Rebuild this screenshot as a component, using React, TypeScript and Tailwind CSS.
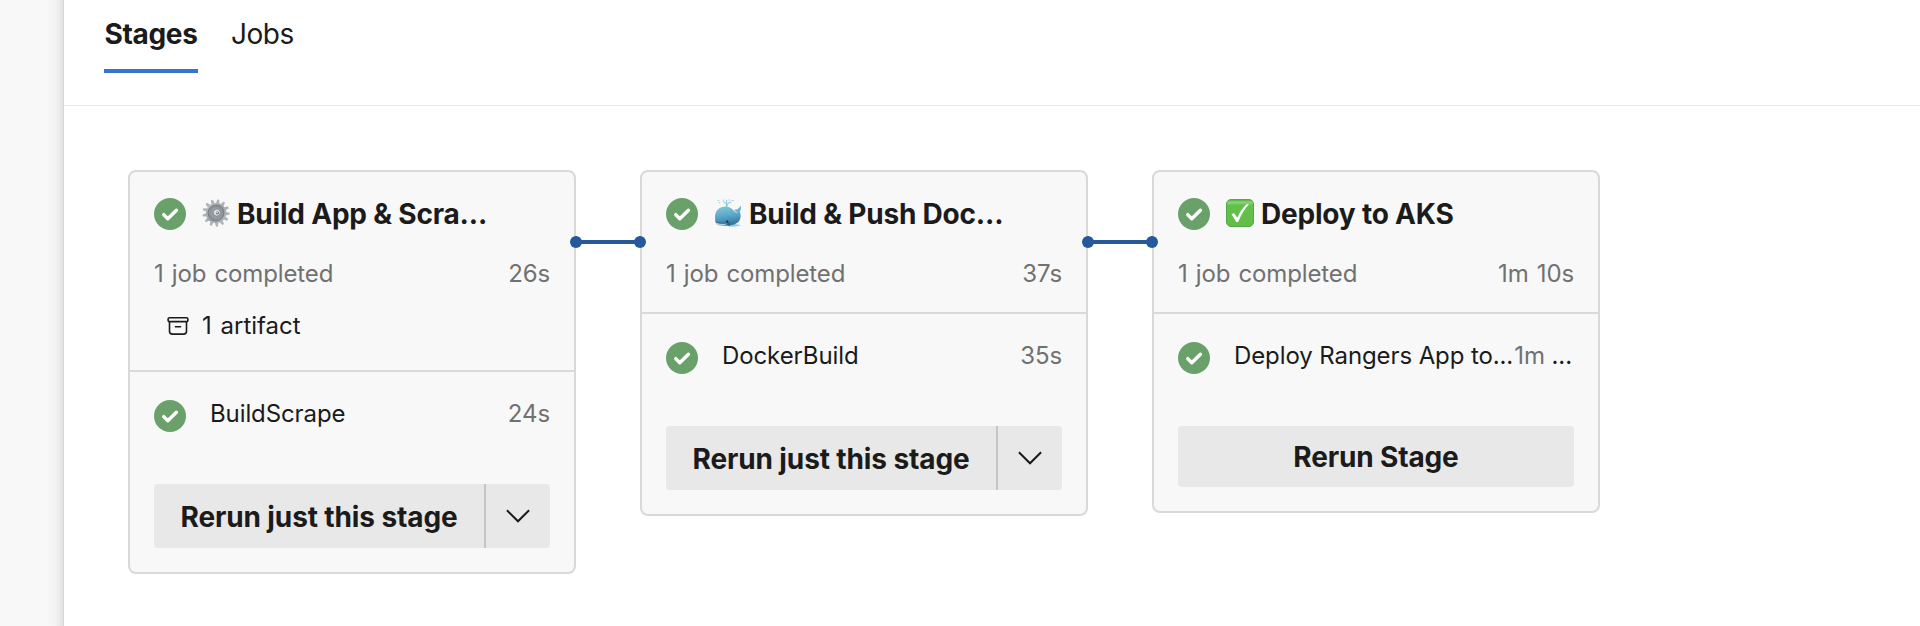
import React from "react";

function StatusIcon() {
  return (
    <svg className="size-8 shrink-0" viewBox="0 0 32 32" fill="none">
      <circle cx="16" cy="16" r="16" fill="#6aa16a" />
      <path d="M9.7 16.6L13.8 20.8L22.4 12.2" stroke="#fff" strokeWidth="3.4" strokeLinecap="round" strokeLinejoin="round" />
    </svg>
  );
}

function GearEmoji() {
  return (
    <svg className="size-7 shrink-0" viewBox="0 0 28 28">
      <defs>
        <linearGradient id="gear" x1="0" y1="0" x2="1" y2="1">
          <stop offset="0" stopColor="#c3c8cc" />
          <stop offset="0.5" stopColor="#9aa1a6" />
          <stop offset="1" stopColor="#b9bec2" />
        </linearGradient>
      </defs>
      {Array.from({ length: 13 }, (_, i) => (
        <path key={i} d="M12.2 5L12.9 0.4H14.9L15.9 5Z" fill="#afb4b8" transform={`rotate(${(i * 360) / 13 + 10} 14 14)`} />
      ))}
      <circle cx="14" cy="14" r="10.2" fill="url(#gear)" />
      <circle cx="14" cy="14" r="7.9" fill="#8d9499" stroke="#777f85" strokeWidth="1" />
      <circle cx="14" cy="14" r="5.4" fill="#979ea3" />
      <circle cx="14.8" cy="13.6" r="3.5" fill="#e2e5e7" stroke="#70787e" strokeWidth="0.7" />
      <circle cx="15.4" cy="13.8" r="1.6" fill="#666d73" />
      <circle cx="15.2" cy="13.6" r="0.8" fill="#f4f5f5" />
    </svg>
  );
}

function WhaleEmoji() {
  return (
    <svg className="size-7 shrink-0" viewBox="0 0 28 28">
      <defs>
        <linearGradient id="whale" x1="0" y1="0" x2="0.2" y2="1">
          <stop offset="0" stopColor="#8accdc" />
          <stop offset="0.55" stopColor="#5aa9cb" />
          <stop offset="1" stopColor="#39749f" />
        </linearGradient>
      </defs>
      <path d="M12.6 7.6C12.8 5 12 3.4 9.6 3M12.8 7.6C12.9 4.6 14.4 3.2 17 3.2M12.7 5.5V1.2" stroke="#7cc8de" strokeWidth="1" fill="none" strokeLinecap="round" />
      <path d="M5 1.6H4M18 1.6H19.4M6 3.4L5 3.8M9 1.2H10M15 1H16" stroke="#9bd6e6" strokeWidth="1" strokeLinecap="round" />
      <path d="M15 25.6C20 24.2 25 25 26.8 26.6C22 28 17 27.8 13 27Z" fill="#9accdf" />
      <path d="M1 18C1 11 6 7.2 12 7.4C18 7.6 19.5 12.6 22.4 13.6C23.6 13.8 23.5 13.4 23 12.9C20.8 12.6 20.2 11.4 20.7 10.4C22.2 10.8 23.5 10.4 24.5 9.3C25.5 8.3 26.1 7.3 26.9 6.7C27.4 9 26.9 11.3 25.7 12.4C27.3 16 27 20.4 24 23.2C20 27 7.5 27.9 3.2 25.3C1.4 24 1 21 1 18Z" fill="url(#whale)" />
      <path d="M1.7 23.3C5 24.8 9 25.2 13 24.6C11.5 26.6 9.5 26.9 7.5 26.8C4.6 26.6 2.4 25.8 1.7 23.3Z" fill="#a9cee2" />
      <path d="M1.4 22.8C5 24.4 10 24.6 14 23.6" stroke="#326a94" strokeWidth="0.8" fill="none" />
      <path d="M14 23.2C16.5 23 17 25.2 15.5 27.2C14 26.2 13.1 24.9 14 23.2Z" fill="#2c6190" />
      <circle cx="13.2" cy="22.6" r="1.1" fill="#142f4b" />
    </svg>
  );
}

function CheckEmoji() {
  return (
    <svg className="size-7 shrink-0" viewBox="0 0 28 28">
      <defs>
        <linearGradient id="check" x1="0" y1="0" x2="0" y2="1">
          <stop offset="0" stopColor="#4ea345" />
          <stop offset="0.1" stopColor="#8bd673" />
          <stop offset="0.22" stopColor="#61c04a" />
          <stop offset="1" stopColor="#64bd48" />
        </linearGradient>
      </defs>
      <rect x="0.5" y="0.5" width="27" height="27" rx="4.5" fill="url(#check)" stroke="#55a948" />
      <path d="M5.4 15L8.2 14.2L11.2 18.8C13.6 13.4 16.7 8.7 20.6 5.2L23 5.2C18.5 10 14.9 15.8 12.2 23H10.2Z" fill="#fff" />
    </svg>
  );
}

function ArtifactIcon() {
  return (
    <svg className="h-5 w-[22px] shrink-0" viewBox="0 0 22 20" fill="none" stroke="#1b1b1b" strokeWidth="1.6">
      <rect x="1.1" y="1.75" width="19.8" height="3.9" rx="1.5" />
      <path d="M2.5 5.8V15.2C2.5 17 3.6 18.1 5.4 18.1H16.6C18.4 18.1 19.5 17 19.5 15.2V5.8M8.4 10.7H13.6" strokeLinecap="round" />
    </svg>
  );
}

function Connector() {
  return (
    <svg className="relative z-10 -mx-1.5 mt-[66px] h-3 w-[76px] shrink-0" viewBox="0 0 76 12" fill="#25599b">
      <rect x="6" y="4" width="64" height="4" />
      <circle cx="6" cy="6" r="6" />
      <circle cx="70" cy="6" r="6" />
    </svg>
  );
}

interface StageProps {
  emoji: React.ReactNode;
  title: string;
  duration: string;
  artifact?: boolean;
  job: React.ReactNode;
  time: React.ReactNode;
  split?: boolean;
}

function Stage({ emoji, title, duration, artifact, job, time, split }: StageProps) {
  return (
    <section className="w-[448px] shrink-0 rounded-lg border-2 border-[#d9d9d9] bg-[#f8f8f8]">
      <header className={`border-b-2 border-[#d9d9d9] px-6 pt-[26px] ${artifact ? "pb-7" : "pb-[22px]"}`}>
        <div className="flex h-8 items-center">
          <StatusIcon />
          <span className="-mt-0.5 ml-4 flex">{emoji}</span>
          <h2 className="ml-[7px] text-[28px] leading-8 font-[650] tracking-[-0.2px] whitespace-nowrap">{title}</h2>
        </div>
        <div className="mt-7 flex h-8 items-center justify-between text-[24px] leading-8 tracking-[-0.12px] text-[#717171] [word-spacing:1.5px]">
          <span>1 job completed</span>
          <span>{duration}</span>
        </div>
        {artifact && (
          <div className="mt-5 flex h-8 items-center pl-[13px] text-[24px] leading-8 [word-spacing:2px]">
            <ArtifactIcon />
            <span className="ml-[13px]">1 artifact</span>
          </div>
        )}
      </header>
      <div className="px-6 pt-7 pb-6">
        <div className="flex h-8 items-center text-[24px] leading-8 tracking-[-0.1px]">
          <StatusIcon />
          <span className="-mt-1 ml-6">{job}</span>
          <span className="-mt-1 ml-auto text-[#717171]">{time}</span>
        </div>
        {split ? (
          <div className="mt-[52px] flex h-16 overflow-hidden rounded bg-[#e8e8e8]">
            <button className="w-[330px] pt-0.5 text-[28px] font-[650] tracking-[-0.12px] whitespace-nowrap">Rerun just this stage</button>
            <button className="flex flex-1 items-center justify-center border-l-2 border-[#c6c6c6]">
              <svg className="h-[14px] w-6" viewBox="0 0 24 14" fill="none" stroke="#1b1b1b" strokeWidth="2">
                <path d="M0.9 1.2L12 12.3L23.1 1.2" />
              </svg>
            </button>
          </div>
        ) : (
          <button className="mt-[52px] block h-[61px] w-full rounded bg-[#e8e8e8] text-[28px] font-[650] tracking-[-0.15px]">Rerun Stage</button>
        )}
      </div>
    </section>
  );
}

export default function App() {
  return (
    <div className="flex h-[626px] w-[1920px] overflow-hidden bg-white font-['Inter',sans-serif] text-[#1b1b1b]">
      <aside className="flex w-16 shrink-0 justify-end border-r border-[#d6d6d6] bg-[#f8f8f8]">
        <div className="w-4 bg-linear-to-r from-[#f8f8f8] via-[#f3f3f3] to-[#e2e2e2]" />
      </aside>
      <main className="flex-1">
        <nav className="flex h-[106px] gap-[33px] border-b border-[#eaeaea] pl-10 text-[28px] leading-8">
          <div className="h-[73px] w-[94px] border-b-4 border-[#3575cf] pt-[18px] text-center font-[650] tracking-[-0.35px]">Stages</div>
          <div className="pt-[18px] tracking-[-0.5px]">Jobs</div>
        </nav>
        <div className="flex items-start pt-16 pl-16">
          <Stage emoji={<GearEmoji />} title="Build App & Scra..." duration="26s" artifact job="BuildScrape" time="24s" split />
          <Connector />
          <Stage emoji={<WhaleEmoji />} title="Build & Push Doc..." duration="37s" job="DockerBuild" time="35s" split />
          <Connector />
          <Stage
            emoji={<CheckEmoji />}
            title="Deploy to AKS"
            duration="1m 10s"
            job={<span className="whitespace-nowrap">Deploy Rangers App to...</span>}
            time={<span className="pr-0.5 whitespace-nowrap">1m <span className="text-[#1b1b1b]">...</span></span>}
          />
        </div>
      </main>
    </div>
  );
}
